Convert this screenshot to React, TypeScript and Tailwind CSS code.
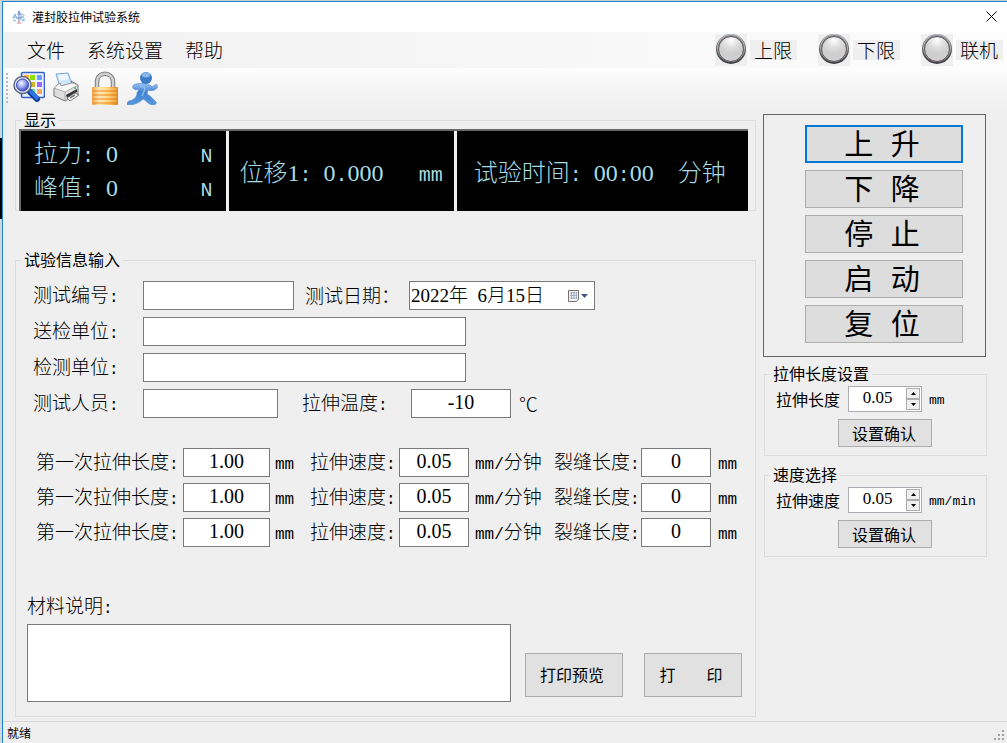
import { useState } from "react";
import type { ReactNode } from "react";

const MENUS = ["文件", "系统设置", "帮助"];
const LIGHTS = ["上限", "下限", "联机"];
const MOVES = ["上 升", "下 降", "停 止", "启 动", "复 位"];
const PASSES = [1, 2, 3];

const BOX =
  "h-[29px] min-w-0 rounded-none border border-[#7a7a7a] bg-white px-1 pb-[2px] font-['Liberation_Serif','Noto_Sans_CJK_SC',serif] text-[20px] leading-5 text-black outline-none";
const BUTTON = "border border-[#adadad] bg-[#e1e1e1] text-black";

type Size = "sm" | "md" | "lg";

const DIGITS: Record<Size, string> = {
  sm: "font-['Liberation_Serif',serif] text-[16px]",
  md: "font-['Liberation_Serif',serif] text-[19px]",
  lg: "font-['Liberation_Serif',serif] text-[24px]",
};
const LATIN: Record<Size, string> = {
  sm: "font-['Liberation_Mono',monospace] text-[13px]",
  md: "font-['Liberation_Mono',monospace] text-[16px]",
  lg: "font-['Liberation_Mono',monospace] text-[20px]",
};
const HAN: Record<Size, string> = {
  sm: "text-[16px] leading-5",
  md: "text-[19px] leading-5",
  lg: "text-[24px] leading-6",
};

// Latin characters take half the width of a Chinese one
function Mixed({ text, size = "md" }: { text: string; size?: Size }) {
  const parts = text.match(/[0-9]+|[\x20-\x2f\x3a-\x7e]+|[^\x20-\x7e]+/g) ?? [];
  return (
    <span className={`whitespace-pre ${HAN[size]}`}>
      {parts.map((part, i) => {
        if (/^[0-9]/.test(part)) return <span key={i} className={DIGITS[size]}>{part}</span>;
        if (/^[\x20-\x7e]/.test(part)) return <span key={i} className={LATIN[size]}>{part}</span>;
        return part;
      })}
    </span>
  );
}

function Group({ title, className, children }: { title: string; className: string; children: ReactNode }) {
  return (
    <fieldset className={`min-w-0 border border-[#dcdcdc] ${className}`}>
      <legend className="ml-[5px] h-4 px-[3px] text-[16px] leading-[14px]">{title}</legend>
      {children}
    </fieldset>
  );
}

function AppIcon() {
  return (
    <svg className="size-[14px]" viewBox="0 0 14 14" fill="none">
      <path d="M1 9 3 4l2 5M1 7h4M9 4v6M9 4c4 0 4 3 0 3 4 0 4 3 1 3M1 11l3-1M10 11l3-1" stroke="#79b2e8" />
      <path d="M7 1v11M5 4h4M5 8h4" stroke="#7384c4" />
      <path d="M5 13h4" stroke="#d87878" />
      <circle cx="7" cy="2" r="1.2" fill="#6da3e5" />
    </svg>
  );
}

function QueryIcon() {
  return (
    <svg className="size-8" viewBox="0 0 32 32">
      <defs>
        <radialGradient id="lens" cx=".4" cy=".35" r=".7">
          <stop offset="0" stopColor="#f4f8ff" />
          <stop offset=".5" stopColor="#9ca6ee" />
          <stop offset="1" stopColor="#3437bd" />
        </radialGradient>
      </defs>
      <rect x="8.500" y="1.500" width="23" height="25" rx="1.500" fill="#eaf1ff" stroke="#3a62c4" strokeWidth="1.600" />
      <rect x="11" y="4" width="5" height="5" fill="#ffae3b" />
      <rect x="17" y="4" width="5" height="5" fill="#8de000" />
      <rect x="24" y="4" width="5" height="5" fill="#65a1ff" />
      <rect x="17" y="11" width="5" height="5" fill="#d5b820" />
      <rect x="24" y="11" width="5" height="5" fill="#a065ff" />
      <rect x="17" y="18" width="5" height="5" fill="#6bd98a" />
      <rect x="24" y="18" width="5" height="5" fill="#ffa75b" />
      <path d="m17 21 7 7" stroke="#153a9b" strokeWidth="6" strokeLinecap="round" />
      <path d="m18 21 6 6" stroke="#2e78ea" strokeWidth="3.500" strokeLinecap="round" />
      <circle cx="9.500" cy="14" r="8.500" fill="#dfe4ee" stroke="#5e6b85" strokeWidth="1.500" />
      <circle cx="9.500" cy="14" r="6" fill="url(#lens)" stroke="#3f4bb6" />
    </svg>
  );
}

function PrinterIcon() {
  return (
    <svg className="size-8" viewBox="0 0 32 32" strokeLinejoin="round">
      <path d="m5 3 12-1 4 11-12 3z" fill="#cfe6ff" stroke="#7ba6d5" />
      <path d="m7 4 9-1 2 5-9 2z" fill="#eff8ff" />
      <path d="m3 17 6-5 1 3 11-3-1-2 7 4v9l-13 7-11-5z" fill="#dedede" stroke="#777" />
      <path d="m3 17 11 4 13-7-6-2-11 3-1-3z" fill="#f8f8f8" stroke="#999" strokeWidth=".7" />
      <path d="M14 21v8" stroke="#aaa" />
      <path d="m15 24 11-6v3l-10 6z" fill="#333" />
      <path d="m16 27 8-5 4 2-9 6z" fill="#fff" stroke="#777" />
      <path d="m19 27 5-3" stroke="#777" strokeWidth="1.500" />
      <circle cx="24" cy="17" r="1" fill="#48b44f" />
    </svg>
  );
}

function LockIcon() {
  return (
    <svg className="h-[34px] w-8" viewBox="0 0 32 34">
      <defs>
        <linearGradient id="brass" x2="1">
          <stop offset="0" stopColor="#ef9a3c" />
          <stop offset=".3" stopColor="#ffeab4" />
          <stop offset=".6" stopColor="#ffd070" />
          <stop offset="1" stopColor="#e77e16" />
        </linearGradient>
      </defs>
      <path d="M8 17v-6c0-11 16-11 16 0v6" fill="none" stroke="#7c7c7c" strokeWidth="4.500" />
      <path d="M8 17v-6c0-11 16-11 16 0v6" fill="none" stroke="#d0d0d0" strokeWidth="2.500" />
      <rect x="3" y="16" width="26" height="18" rx="1" fill="url(#brass)" />
      <path d="M4 20h24M4 24h24M4 28h24M4 32h24" stroke="#ea8a2c" strokeWidth="1.200" />
      <path d="M4 18h24M4 22h24M4 26h24M4 30h24" stroke="#fff0b8" strokeWidth=".7" opacity=".7" />
    </svg>
  );
}

function RunnerIcon() {
  return (
    <svg className="h-[34px] w-8" viewBox="0 0 32 34">
      <defs>
        <linearGradient id="runner" x2="0" y2="1">
          <stop offset="0" stopColor="#9cc4f4" />
          <stop offset=".4" stopColor="#3f82d0" />
          <stop offset="1" stopColor="#5b99e0" />
        </linearGradient>
      </defs>
      <path
        d="M9 13c4-1 9-1 14 1 2 2 3 2 6-1 2 1 2 4 0 5-3 2-5 2-8 1l-1 4c4 2 6 5 9 8 1 2-1 3-4 3-4-1-5-4-9-6-4 4-9 6-15 6-2 0-1-3 1-4 5-1 8-4 8-8l2-4c-3 1-5 1-6-1-1-2 0-3 3-4z"
        fill="url(#runner)"
        stroke="#5e93d2"
        strokeWidth=".7"
      />
      <circle cx="19" cy="7" r="6" fill="#3c7cc6" />
      <ellipse cx="19" cy="4" rx="4" ry="2.500" fill="#a9cffb" opacity=".7" />
      <path d="M13 16c3-1 5 0 5 2l-3 7" fill="none" stroke="#8bbaf1" strokeWidth="1.500" />
    </svg>
  );
}

const TOOLS = [
  { name: "查询", icon: <QueryIcon /> },
  { name: "打印", icon: <PrinterIcon /> },
  { name: "锁定", icon: <LockIcon /> },
  { name: "运行", icon: <RunnerIcon /> },
];

function Light() {
  return (
    <svg className="size-8 bg-[#efefef]" viewBox="0 0 32 32">
      <defs>
        <linearGradient id="rim" x2="0" y2="1">
          <stop offset="0" stopColor="#8a9095" />
          <stop offset="1" stopColor="#3e4145" />
        </linearGradient>
        <radialGradient id="bulb" cx=".5" cy=".15" r=".55">
          <stop offset="0" stopColor="#ffffff" />
          <stop offset=".5" stopColor="#e0e0e0" />
          <stop offset="1" stopColor="#cecece" />
        </radialGradient>
      </defs>
      <circle cx="16" cy="15" r="15" fill="url(#rim)" />
      <circle cx="16" cy="14" r="13.500" fill="none" stroke="#c9cdd0" strokeWidth=".8" />
      <circle cx="16" cy="15" r="12.500" fill="url(#bulb)" stroke="#655253" />
    </svg>
  );
}

function Spinner({ id }: { id: string }) {
  const [value, setValue] = useState("0.05");
  const step = (by: number) => setValue((v) => Math.max(0, Number(v) + by).toFixed(2));
  const arrow = "flex flex-1 items-center justify-center border border-[#adadad] bg-[#f0f0f0]";
  return (
    <div className="flex h-[26px] w-[74px] border border-[#abadb3] bg-white">
      <input
        id={id}
        value={value}
        onChange={(e) => setValue(e.target.value)}
        className="w-0 flex-1 bg-transparent pb-[3px] text-center font-['Liberation_Serif',serif] text-[17px] leading-5 outline-none"
      />
      <div className="flex w-[15px] flex-col py-px pr-px">
        <button type="button" aria-label="增加" onClick={() => step(0.01)} className={arrow}>
          <svg className="h-[3px] w-[5px]" viewBox="0 0 5 3"><path d="M0 3h5L2.500 0z" /></svg>
        </button>
        <button type="button" aria-label="减少" onClick={() => step(-0.01)} className={arrow}>
          <svg className="h-[3px] w-[5px]" viewBox="0 0 5 3"><path d="M0 0h5L2.500 3z" /></svg>
        </button>
      </div>
    </div>
  );
}

function SettingGroup({ title, label, unit, id }: { title: string; label: string; unit: string; id: string }) {
  return (
    <Group title={title} className="h-[90px]">
      <div className="mt-1 flex h-[26px] items-center pl-[11px]">
        <label htmlFor={id} className="w-[72px] text-[16px] leading-5">{label}</label>
        <Spinner id={id} />
        <span className="ml-[7px] pb-[3px]"><Mixed text={unit} size="sm" /></span>
      </div>
      <button type="button" className={`mt-[7px] ml-[73px] block h-7 w-[94px] pr-[2px] text-[16px] leading-5 ${BUTTON}`}>
        设置确认
      </button>
    </Group>
  );
}

function Field({ id, label, width }: { id: string; label: string; width: string }) {
  return (
    <div className="flex items-center">
      <label htmlFor={id} className="w-[110px]"><Mixed text={label} /></label>
      <input id={id} className={`${BOX} ${width}`} />
    </div>
  );
}

function Readouts() {
  return (
    <div className="mt-px mr-[7px] ml-[3px] grid h-[82px] grid-cols-[209fr_228fr_292fr] border-t-2 border-l-2 border-[#696969] bg-black font-light text-[#a9dce3]">
      <div className="flex flex-col justify-center gap-[5px] border-r-[3px] border-[#efefef] pr-[14px] pl-[13px]">
        {["拉力: 0", "峰值: 0"].map((row) => (
          <div key={row} className="flex justify-between">
            <Mixed text={row} size="lg" />
            <Mixed text="N" size="lg" />
          </div>
        ))}
      </div>
      <div className="flex items-center justify-between border-r-[3px] border-[#efefef] pt-1 pr-[11px] pl-[10px]">
        <Mixed text="位移1: 0.000" size="lg" />
        <Mixed text="mm" size="lg" />
      </div>
      <div className="flex items-center pt-1 pl-[17px]">
        <Mixed text="试验时间: 00:00  分钟" size="lg" />
      </div>
    </div>
  );
}

function TestInfo() {
  return (
    <Group title="试验信息输入" className="mt-[41px] pb-[14px]">
      <div className="mt-[13px] flex flex-col gap-[7px] pl-[17px] font-light">
        <div className="flex items-center">
          <Field id="test-no" label="测试编号:" width="w-[151px]" />
          <label htmlFor="test-date" className="ml-[11px] w-[104px]"><Mixed text="测试日期：" /></label>
          <div className="flex h-[29px] w-[186px] items-center border border-[#7a7a7a] bg-white pl-px">
            <input
              id="test-date"
              defaultValue="2022年  6月15日"
              className="w-0 flex-1 bg-transparent font-['Liberation_Serif','Noto_Sans_CJK_SC',serif] text-[19px] leading-6 outline-none"
            />
            <button type="button" aria-label="选择日期" className="mr-[5px]">
              <svg className="h-[14px] w-[22px]" viewBox="0 0 22 14">
                <path d="M1.500 1.500h10v9l-2 2h-8z" fill="#f2f2f2" stroke="#776d6b" />
                <path d="M3 4h7M3 6.500h7M3 9h7M4.500 3v7M7 3v7M9.500 3v7" stroke="#8fa0b8" strokeWidth=".8" />
                <path d="M14 5h7l-3.500 4z" fill="#41577f" />
              </svg>
            </button>
          </div>
        </div>
        <Field id="sender" label="送检单位:" width="w-[323px]" />
        <Field id="tester-unit" label="检测单位:" width="w-[323px]" />
        <div className="flex items-center">
          <Field id="tester" label="测试人员:" width="w-[135px]" />
          <label htmlFor="temperature" className="ml-6 w-[109px]"><Mixed text="拉伸温度:" /></label>
          <input id="temperature" defaultValue="-10" className={`${BOX} w-[100px] text-center`} />
          <span className="ml-2 text-[19px] leading-5">℃</span>
        </div>
      </div>

      <div className="mt-[30px] flex flex-col gap-[6px] pl-[20px] font-light">
        {PASSES.map((n) => (
          <div key={n} className="grid grid-cols-[147px_87px_40px_89px_70px_85px_87px_70px_auto] items-center">
            <label htmlFor={`length-${n}`}><Mixed text="第一次拉伸长度:" /></label>
            <input id={`length-${n}`} defaultValue="1.00" className={`${BOX} text-center`} />
            <span className="pl-[5px]"><Mixed text="mm" /></span>
            <label htmlFor={`speed-${n}`}><Mixed text="拉伸速度:" /></label>
            <input id={`speed-${n}`} defaultValue="0.05" className={`${BOX} text-center`} />
            <span className="pl-[6px]"><Mixed text="mm/分钟" /></span>
            <label htmlFor={`crack-${n}`}><Mixed text="裂缝长度:" /></label>
            <input id={`crack-${n}`} defaultValue="0" className={`${BOX} text-center`} />
            <span className="pl-[7px]"><Mixed text="mm" /></span>
          </div>
        ))}
      </div>

      <div className="mt-[47px] flex items-end pr-[13px] pl-[11px]">
        <div className="flex min-w-0 flex-1 flex-col">
          <label htmlFor="material" className="h-[30px] font-light"><Mixed text="材料说明:" /></label>
          <textarea id="material" className="h-[78px] resize-none border border-[#7a7a7a] bg-white p-1 text-[16px] outline-none" />
        </div>
        <button type="button" className={`mb-[5px] ml-[14px] h-11 w-[98px] pr-1 pb-[2px] text-[16px] leading-5 ${BUTTON}`}>打印预览</button>
        <button type="button" className={`mb-[5px] ml-[21px] h-11 w-[98px] pr-1 ${BUTTON}`}>
          <Mixed text="打    印" size="sm" />
        </button>
      </div>
    </Group>
  );
}

export default function App() {
  return (
    <div className="flex min-h-screen border-t border-[#cfcfcf] bg-[#efefef] font-['Noto_Sans_CJK_SC',sans-serif] text-black">
      {/* sliver of the window behind */}
      <div className="flex w-[2px] shrink-0 flex-col bg-[#d4d6d8]">
        <div className="mt-[137px] h-[81px] bg-black" />
      </div>

      <div className="flex min-w-0 flex-1 flex-col border-t border-l border-[#1883d7]">
        <header className="flex h-[30px] items-center bg-white pr-[10px] pb-px pl-[9px]">
          <AppIcon />
          <h1 className="ml-[6px] text-[12px] leading-4">灌封胶拉伸试验系统</h1>
          <button type="button" aria-label="关闭" className="ml-auto py-[2px] pl-[2px]">
            <svg className="size-[11px]" viewBox="0 0 11 11"><path d="m.5.5 10 10m0-10-10 10" stroke="#000" /></svg>
          </button>
        </header>

        <div className="flex h-9 items-center bg-linear-to-r from-[#f0f0f0] to-[#fdfdfd] pr-1 pl-6 font-light">
          <nav className="flex gap-[22px]">
            {MENUS.map((menu) => (
              <button key={menu} type="button" className="text-[19px] leading-5">{menu}</button>
            ))}
          </nav>
          <div className="ml-auto flex gap-[21px]">
            {LIGHTS.map((light) => (
              <div key={light} className="flex items-center gap-[3px]">
                <Light />
                <span className="w-[47px] bg-[#efefef] pl-1 text-[19px] leading-5">{light}</span>
              </div>
            ))}
          </div>
        </div>

        <div className="flex h-10 items-center gap-1 bg-linear-to-b from-[#fdfdfd] to-[#efefef] pl-[3px]">
          <div className="h-[30px] border-l-2 border-dotted border-[#b8b8b8]" />
          <div className="flex gap-1">
            {TOOLS.map((tool) => (
              <button key={tool.name} type="button" aria-label={tool.name} className="flex w-[34px] justify-center">
                {tool.icon}
              </button>
            ))}
          </div>
        </div>

        <main className="flex flex-1 items-start gap-[7px] pt-1 pr-5 pb-1 pl-3">
          <div className="min-w-0 flex-1">
            <Group title="显示" className="h-[99px]">
              <Readouts />
            </Group>
            <TestInfo />
          </div>

          <div className="w-[224px] shrink-0">
            <div className="mt-[2px] mr-px flex flex-col gap-[7px] border border-[#646464] pt-[10px] pr-[22px] pb-[13px] pl-[41px]">
              {MOVES.map((move, i) => (
                <button
                  key={move}
                  type="button"
                  className={`h-[38px] bg-[#dddddd] pr-1 font-['Liberation_Mono','Noto_Sans_CJK_SC',monospace] text-[29px] leading-8 ${
                    i === 0 ? "border-2 border-[#0078d7] pt-[5px]" : "border border-[#adadad] pt-[6px]"
                  }`}
                >
                  {move}
                </button>
              ))}
            </div>
            <div className="mt-[9px] ml-px flex flex-col gap-[11px]">
              <SettingGroup id="stretch-length" title="拉伸长度设置" label="拉伸长度" unit="mm" />
              <SettingGroup id="stretch-speed" title="速度选择" label="拉伸速度" unit="mm/min" />
            </div>
          </div>
        </main>

        <footer className="flex h-[22px] items-center justify-between border-t border-[#d7d7d7] pr-[2px] pl-1 text-[12px] leading-4">
          <span>就绪</span>
          <svg className="mt-1 size-3" viewBox="0 0 12 12" fill="#a0a0a0">
            <path d="M9 1h2v2H9zM5 5h2v2H5zM9 5h2v2H9zM1 9h2v2H1zM5 9h2v2H5zM9 9h2v2H9z" />
          </svg>
        </footer>
      </div>
    </div>
  );
}
